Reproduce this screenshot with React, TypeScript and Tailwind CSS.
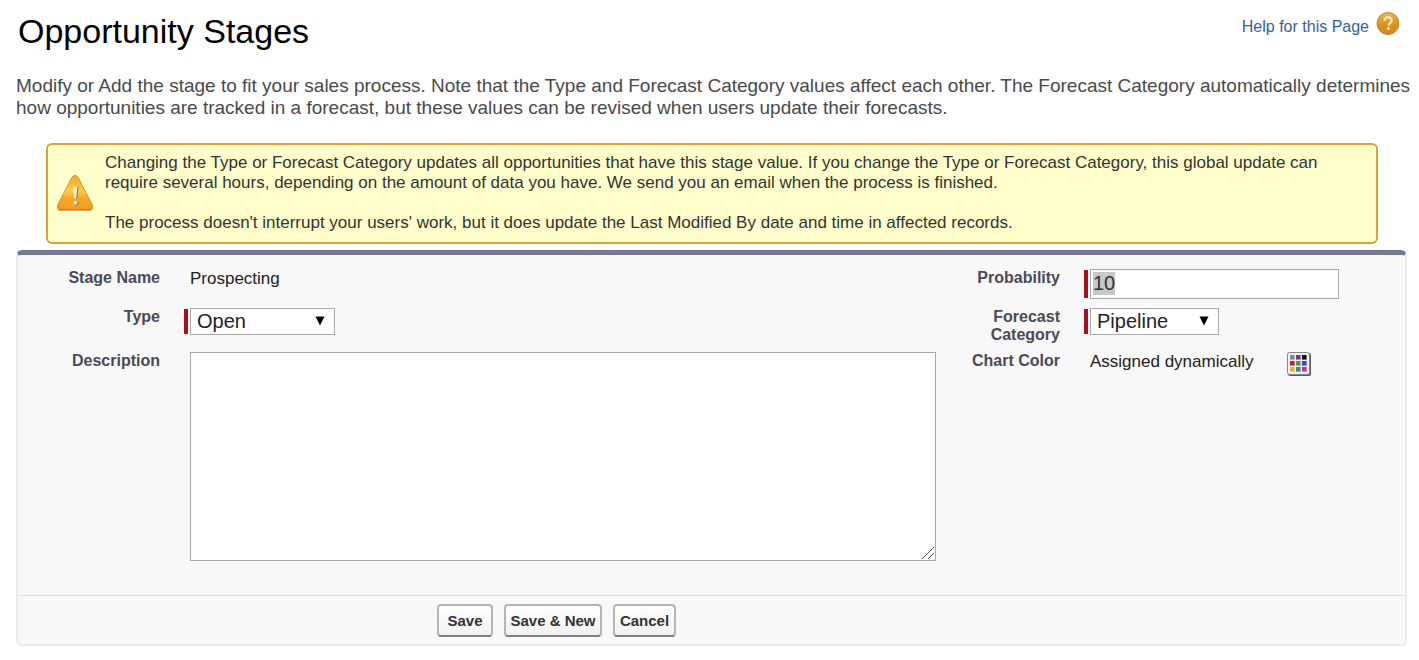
import { FC, ReactNode, useEffect, useRef } from "react";

const swatches = [
  "#858585", "#6b3a8c", "#111111",
  "#c4202c", "#3fa447", "#4040d0",
  "#e8b04a", "#3f8585", "#c03580",
];

const HelpIcon: FC = () => (
  <svg className="h-6 w-6" viewBox="0 0 24 24" aria-hidden="true">
    <defs>
      <linearGradient id="help" x1="0" y1="0" x2="0" y2="1">
        <stop offset="0" stopColor="#f2b645" />
        <stop offset="0.55" stopColor="#dd901c" />
        <stop offset="1" stopColor="#cf8a25" />
      </linearGradient>
    </defs>
    <circle cx="13" cy="12.5" r="11" fill="url(#help)" stroke="#b98845" strokeWidth="1" />
    <path
      d="M9.6 9.9c0-2.2 1.5-3.5 3.5-3.5s3.5 1.2 3.5 3.1c0 2.4-3.1 2.6-3.1 5.2"
      fill="none"
      stroke="#fdecc8"
      strokeWidth="2.2"
    />
    <circle cx="13.4" cy="17.6" r="1.5" fill="#fdecc8" />
  </svg>
);

const WarningIcon: FC = () => (
  <svg className="h-9 w-9 shrink-0" viewBox="0 0 36 36" aria-hidden="true">
    <defs>
      <linearGradient id="warning" x1="0" y1="0" x2="0" y2="1">
        <stop offset="0" stopColor="#eca72e" />
        <stop offset="0.45" stopColor="#fbce4a" />
        <stop offset="0.65" stopColor="#f8a92b" />
        <stop offset="1" stopColor="#f39a20" />
      </linearGradient>
    </defs>
    <path
      d="M15 2.2c1.4-2.2 4.6-2.2 6 0L35.3 30c1 2.6.2 4.8-2.1 4.8H2.8C.5 34.8-.3 32.6.7 30Z"
      fill="url(#warning)"
      stroke="#d8922d"
    />
    <path d="M1.5 34.8h33" stroke="#b87a3c" strokeWidth="1.2" />
    <path d="M17 11.5h4.6l-1.2 12.3h-2.2Z" fill="#9a7a3c" />
    <path d="M16 11.5h4.4l-1.1 12h-2.2Z" fill="#f4ecd0" />
    <circle cx="19.2" cy="28.2" r="2.3" fill="#9a7a3c" />
    <circle cx="18.3" cy="27.8" r="2.1" fill="#f4ecd0" />
  </svg>
);

const PaletteIcon: FC = () => (
  <svg className="h-6 w-6" viewBox="0 0 24 24" aria-hidden="true">
    <rect x="1" y="1" width="23" height="23" rx="2" fill="#5c5c5c" />
    <rect x="0.5" y="0.5" width="22" height="22" rx="2" fill="#f1eff3" stroke="#858585" />
    {swatches.map((color, i) => (
      <rect
        key={color}
        x={3 + (i % 3) * 6}
        y={3 + Math.floor(i / 3) * 6}
        width="4.6"
        height="4.6"
        fill={color}
      />
    ))}
  </svg>
);

const Label: FC<{ htmlFor?: string; children: ReactNode; className?: string }> = ({
  htmlFor,
  children,
  className = "",
}) => (
  <label
    htmlFor={htmlFor}
    className={`text-right text-base/[18px] font-bold text-[#4a4a56] ${className}`}
  >
    {children}
  </label>
);

const Required: FC<{ children: ReactNode }> = ({ children }) => (
  <div className="flex w-fit gap-0.5 self-start">
    <span className="my-px w-1 bg-[#a8101f]" />
    {children}
  </div>
);

const Select: FC<{ id: string; options: string[]; className: string }> = ({
  id,
  options,
  className,
}) => (
  <div className="relative">
    <select
      id={id}
      className={`block h-[27px] appearance-none border border-[#a9a9a9] bg-white px-1.5 pb-0.5 text-xl/6 text-[#222] ${className}`}
    >
      {options.map((option) => (
        <option key={option}>{option}</option>
      ))}
    </select>
    <svg
      className="pointer-events-none absolute top-2 right-2.5 h-2.5 w-2.5"
      viewBox="0 0 10 10"
      aria-hidden="true"
    >
      <path d="M0.5 0.5h9L5 9.5Z" fill="#000" />
    </svg>
  </div>
);

const Button: FC<{ children: ReactNode; className: string }> = ({ children, className }) => (
  <button
    type="button"
    className={`h-[33px] rounded border-2 border-[#b5b5b5] border-b-[#7f7f7f] bg-linear-to-b from-white to-[#f1f1f1] text-[15px]/5 font-bold whitespace-nowrap text-[#333] ${className}`}
  >
    {children}
  </button>
);

const App: FC = () => {
  const probabilityRef = useRef<HTMLInputElement>(null);

  useEffect(() => {
    probabilityRef.current?.focus();
    probabilityRef.current?.select();
  }, []);

  return (
    <main className="bg-white pt-[11px] pr-3 pb-3 pl-4 font-['Liberation_Sans',Arial,sans-serif]">
      {/* Page title and help link */}
      <header className="flex items-start justify-between pr-2 pl-0.5">
        <h1 className="text-[34px]/10 text-black">Opportunity Stages</h1>
        <a href="#help" className="flex items-start gap-1.5 text-base/6 text-[#36629c]">
          <span className="pt-1">Help for this Page</span>
          <HelpIcon />
        </a>
      </header>

      <p className="mt-6 -mr-2 text-[19px]/[22px] text-[#4a4a4a]">
        Modify or Add the stage to fit your sales process. Note that the Type and Forecast Category
        values affect each other. The Forecast Category automatically determines how opportunities
        are tracked in a forecast, but these values can be revised when users update their
        forecasts.
      </p>

      {/* Warning message */}
      <section className="mr-[29px] ml-[30px] mt-6 flex items-center gap-3 rounded-md border-2 border-[#dfa03a] bg-[#ffffcc] px-[9px] pt-2 pb-[9px] text-[17px]/5 text-[#333]">
        <WarningIcon />
        <div className="flex flex-col gap-5">
          <p>
            Changing the Type or Forecast Category updates all opportunities that have this stage
            value. If you change the Type or Forecast Category, this global update can require
            several hours, depending on the amount of data you have. We send you an email when the
            process is finished.
          </p>
          <p>
            The process doesn't interrupt your users' work, but it does update the Last Modified By
            date and time in affected records.
          </p>
        </div>
      </section>

      {/* Stage form */}
      <form className="mt-1.5 rounded-md border-x-2 border-t-[5px] border-b-2 border-[#eaeaea] border-t-[#747a8f] bg-[#f8f8f8]">
        <div className="grid grid-cols-[142px_1fr_100px_321px] gap-x-6 pt-3.5 pb-[34px]">
          <Label>Stage Name</Label>
          <span className="h-[39px] pl-1.5 text-[17px]/5 text-[#222]">Prospecting</span>
          <Label htmlFor="probability">Probability</Label>
          <Required>
            <input
              ref={probabilityRef}
              id="probability"
              defaultValue="10"
              className="h-[30px] w-[249px] border border-[#a9a9a9] bg-white px-0.5 pb-0.5 text-xl/6 text-[#333] outline-none selection:bg-[#c8c8c8] selection:text-[#333]"
            />
          </Required>

          <Label htmlFor="type">Type</Label>
          <Required>
            <Select
              id="type"
              options={["Open", "Closed/Won", "Closed/Lost"]}
              className="w-[145px]"
            />
          </Required>
          <Label htmlFor="forecast">Forecast Category</Label>
          <Required>
            <Select
              id="forecast"
              options={["Pipeline", "Best Case", "Commit", "Omitted", "Closed"]}
              className="w-[129px]"
            />
          </Required>

          <Label htmlFor="description" className="mt-2">
            Description
          </Label>
          <div className="relative mt-2 ml-1.5">
            <textarea
              id="description"
              className="block h-[209px] w-full resize-none border border-[#a9a9a9] bg-white p-1 text-base outline-none"
            />
            <svg
              className="pointer-events-none absolute right-0.5 bottom-0.5 h-3 w-3"
              viewBox="0 0 12 12"
              aria-hidden="true"
            >
              <path d="M0 12L12 0M6 12L12 6" stroke="#555" strokeWidth="1" />
            </svg>
          </div>
          <Label htmlFor="color" className="mt-2">
            Chart Color
          </Label>
          <div className="mt-2 flex items-start gap-[34px] pl-1.5 text-[17px]/5 text-[#222]">
            <span>Assigned dynamically</span>
            <button type="button" id="color" aria-label="Pick a color">
              <PaletteIcon />
            </button>
          </div>
        </div>

        <div className="flex gap-[11px] border-t border-[#dcdcdc] pt-2 pb-[7px] pl-[419px]">
          <Button className="w-14">Save</Button>
          <Button className="w-[98px]">Save &amp; New</Button>
          <Button className="w-[63px]">Cancel</Button>
        </div>
      </form>
    </main>
  );
};

export default App;
